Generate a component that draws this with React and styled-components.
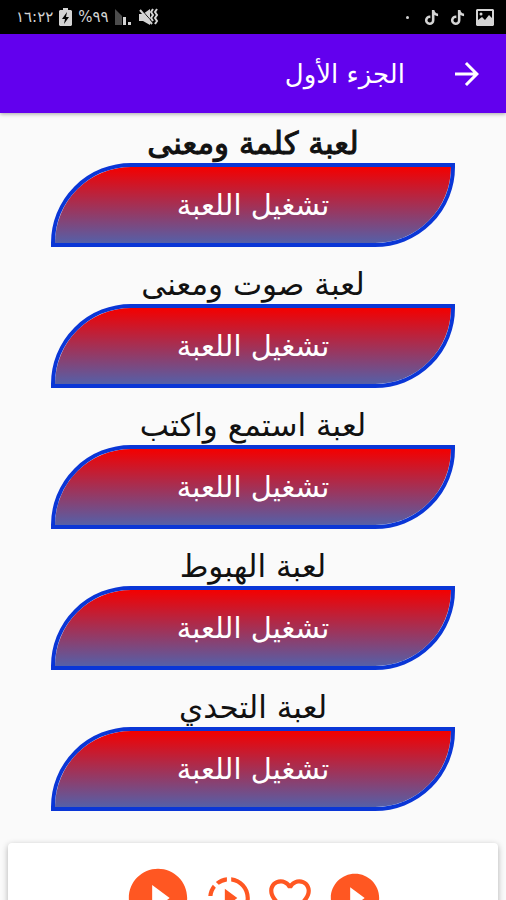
import React from "react";
import styled, { createGlobalStyle } from "styled-components";
import {
  MdArrowForward,
  MdFavoriteBorder,
  MdPlayCircleFilled,
  MdSlowMotionVideo,
} from "react-icons/md";
import { FaTiktok } from "react-icons/fa6";

const GlobalStyle = createGlobalStyle`
  * {
    box-sizing: border-box;
  }

  body {
    margin: 0;
    background: #fafafa;
    font-family: "DejaVu Sans", sans-serif;
  }
`;

const Screen = styled.div`
  display: flex;
  flex-direction: column;
  height: 100vh;
  overflow: hidden;
`;

const StatusBar = styled.div`
  display: flex;
  flex: none;
  align-items: center;
  justify-content: space-between;
  height: 34px;
  padding: 0 12px 0 16px;
  background: #000;
  color: #d4d4d4;
  font-size: 15px;
  direction: ltr;
`;

const StatusGroup = styled.div`
  display: flex;
  align-items: center;
  gap: ${({ $gap }) => $gap}px;

  bdo {
    line-height: 20px;
  }
`;

const Dot = styled.span`
  width: 3px;
  height: 3px;
  margin-right: 4px;
  border-radius: 50%;
  background: #d4d4d4;
`;

const Header = styled.header`
  display: flex;
  flex: none;
  align-items: center;
  gap: 44px;
  height: 79px;
  padding: 0 21px;
  background: #6200ee;
  color: #fff;
  box-shadow: 0 1px 4px rgba(0, 0, 0, 0.35);

  .title {
    margin: 0;
    font-size: 26px;
    font-weight: 400;
    line-height: 32px;
  }
`;

const BackButton = styled.button`
  display: flex;
  padding: 0;
  border: 0;
  background: none;
  color: inherit;
`;

const GameList = styled.main`
  flex: none;
  padding-top: 11px;
`;

const Game = styled.section`
  display: flex;
  flex-direction: column;
  align-items: center;
  margin-bottom: 18px;
`;

const GameTitle = styled.h2`
  margin: 0;
  color: #111;
  font-size: 31px;
  font-weight: 400;
  line-height: 39px;
  -webkit-text-stroke: ${({ $strong }) => ($strong ? "1px #111" : "0")};
`;

const PlayButton = styled.button`
  width: 80%;
  height: 84px;
  padding: 0;
  border: 4px solid #0a36d6;
  border-radius: 80px 0;
  background: linear-gradient(#f40000, #5560a8) padding-box;
  color: #fff;
  font-family: inherit;
  font-size: 29px;
  line-height: 32px;
`;

const Player = styled.footer`
  display: flex;
  flex: none;
  align-items: center;
  justify-content: center;
  gap: 11px;
  margin: 14px 8px 0;
  padding: 20px 0;
  border-radius: 4px;
  background: #fff;
  box-shadow: 0 2px 6px rgba(0, 0, 0, 0.3);
  color: #ff5722;
  direction: ltr;
`;

const PlayerButton = styled.button`
  display: flex;
  padding: 0;
  border: 0;
  background: none;
  color: inherit;
`;

const BatteryIcon = () => (
  <svg width="13" height="18" viewBox="0 0 13 18" aria-hidden="true">
    <path d="M4 0h5v2h3l1 1v14l-1 1H1l-1-1V3l1-1h3z" fill="#d4d4d4" />
    <path d="M8 4L3 11h3l-1 5 5-7H7z" fill="#000" />
  </svg>
);

const SignalIcon = () => (
  <svg width="18" height="16" viewBox="0 0 18 16" aria-hidden="true">
    <path d="M0 0l7 7v9H0z" fill="#4c4c4c" />
    <path d="M8 8h3v8H8zM13 13h3v3h-3z" fill="#d4d4d4" />
  </svg>
);

const MuteIcon = () => (
  <svg width="20" height="18" viewBox="0 0 20 18" aria-hidden="true">
    <path d="M0 6h4l7-5v16l-7-4H0z" fill="#d4d4d4" />
    <path d="M2 1l12 14" stroke="#000" />
    <path
      d="M1 2l12 14M14 1l-2 3 2 3-2 3 2 3M18 1l-2 3 2 3-2 3 2 3-2 3"
      fill="none"
      stroke="#d4d4d4"
      strokeWidth="2"
    />
  </svg>
);

const PhotoIcon = () => (
  <svg width="18" height="17" viewBox="0 0 18 17" aria-hidden="true">
    <path
      d="M1 0h16l1 1v15l-1 1H1l-1-1V1zM2 2v9l4-3 3 3 4-5 3 3V2z"
      fill="#d4d4d4"
      fillRule="evenodd"
    />
    <circle cx="5" cy="5" r="1.5" fill="#d4d4d4" />
  </svg>
);

const games = [
  "لعبة كلمة ومعنى",
  "لعبة صوت ومعنى",
  "لعبة استمع واكتب",
  "لعبة الهبوط",
  "لعبة التحدي",
];

const controls = [
  { label: "تشغيل", Icon: MdPlayCircleFilled, size: 70 },
  { label: "تشغيل بطيء", Icon: MdSlowMotionVideo, size: 50 },
  { label: "المفضلة", Icon: MdFavoriteBorder, size: 50 },
  { label: "تشغيل المقطع", Icon: MdPlayCircleFilled, size: 58 },
];

const App = () => {
  return (
    <Screen dir="rtl">
      <GlobalStyle />

      <StatusBar>
        <StatusGroup $gap={6}>
          <bdo dir="ltr">١٦:٢٢</bdo>
          <BatteryIcon />
          <bdo dir="ltr">%٩٩</bdo>
          <SignalIcon />
          <MuteIcon />
        </StatusGroup>
        <StatusGroup $gap={11}>
          <Dot />
          <FaTiktok size={15} />
          <FaTiktok size={15} />
          <PhotoIcon />
        </StatusGroup>
      </StatusBar>

      <Header>
        <BackButton aria-label="رجوع">
          <MdArrowForward size={36} />
        </BackButton>
        <h1 className="title">الجزء الأول</h1>
      </Header>

      <GameList>
        {games.map((name, i) => (
          <Game key={name}>
            <GameTitle $strong={i === 0}>{name}</GameTitle>
            <PlayButton>تشغيل اللعبة</PlayButton>
          </Game>
        ))}
      </GameList>

      <Player>
        {controls.map(({ label, Icon, size }) => (
          <PlayerButton key={label} aria-label={label}>
            <Icon size={size} />
          </PlayerButton>
        ))}
      </Player>
    </Screen>
  );
};

export default App;
